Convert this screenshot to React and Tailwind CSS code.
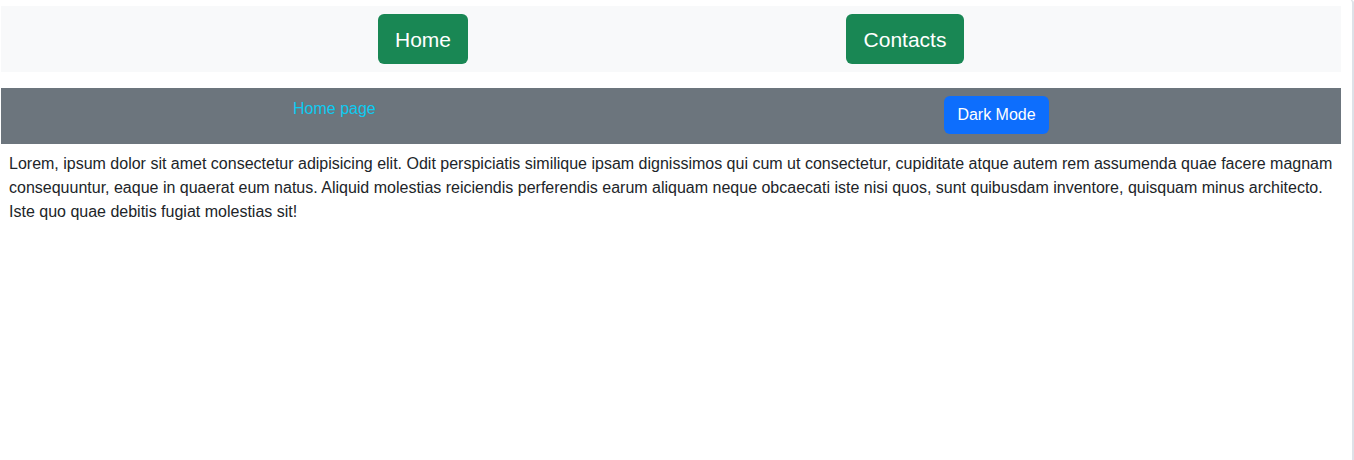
import React from "react";

const App = () => {
  return (
    <div className="w-[1354px] h-[460px] bg-white font-['Liberation_Sans',Arial,sans-serif] flex">
      {/* page area */}
      <div className="w-[1351px] flex flex-col pt-[6px] pl-px">
        {/* top nav */}
        <nav className="w-[1340px] h-[66px] bg-[#f8f9fa] flex items-center">
          <button className="ml-[377px] w-[90px] h-[50px] rounded-md bg-[#198754] text-white text-[21px] leading-[30px] pt-px">
            Home
          </button>
          <button className="ml-[378px] w-[118px] h-[50px] rounded-md bg-[#198754] text-white text-[21px] leading-[30px] pt-px">
            Contacts
          </button>
        </nav>

        {/* page header */}
        <div className="w-[1340px] h-[56px] mt-4 bg-[#6c757d] flex items-start pt-2">
          <a href="#" className="w-[82px] ml-[292px] pt-px whitespace-nowrap text-[#0dcaf0] text-base leading-6">
            Home page
          </a>
          <button className="ml-[569px] w-[105px] h-[38px] rounded-md bg-[#0d6efd] text-white text-base leading-6">
            Dark Mode
          </button>
        </div>

        <p className="w-[1340px] mt-2 px-2 text-base leading-6 text-[#212529]">
          Lorem, ipsum dolor sit amet consectetur adipisicing elit. Odit perspiciatis similique ipsam dignissimos qui cum ut consectetur, cupiditate atque autem rem assumenda quae facere magnam consequuntur, eaque in quaerat eum natus. Aliquid molestias reiciendis perferendis earum aliquam neque obcaecati iste nisi quos, sunt quibusdam inventore, quisquam minus architecto. Iste quo quae debitis fugiat molestias sit!
        </p>
      </div>

      {/* window edge */}
      <div className="w-[3px] h-full border-r-2 border-t border-[#dde2e8] rounded-tr-md"></div>
    </div>
  );
};

export default App;
